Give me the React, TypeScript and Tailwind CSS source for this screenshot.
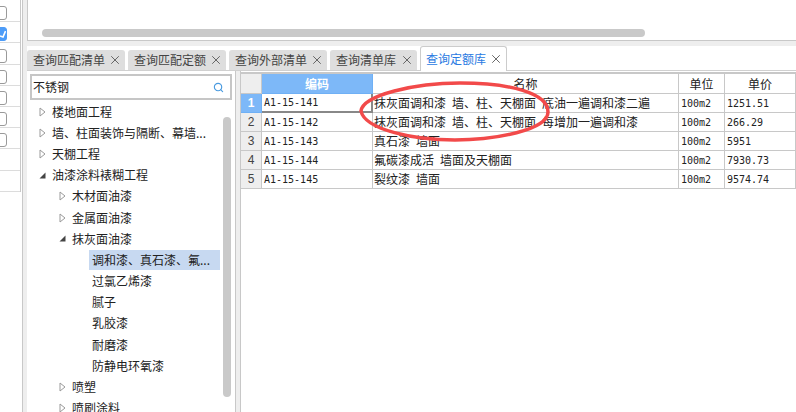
import { Search, X } from 'lucide-react'

const cjk = '"Noto Sans CJK SC", "Liberation Sans", sans-serif'

const tabs = ['查询匹配清单', '查询匹配定额', '查询外部清单', '查询清单库', '查询定额库']

const tree = [
  { label: '楼地面工程', level: 0, state: 'closed' },
  { label: '墙、柱面装饰与隔断、幕墙...', level: 0, state: 'closed' },
  { label: '天棚工程', level: 0, state: 'closed' },
  { label: '油漆涂料裱糊工程', level: 0, state: 'open' },
  { label: '木材面油漆', level: 1, state: 'closed' },
  { label: '金属面油漆', level: 1, state: 'closed' },
  { label: '抹灰面油漆', level: 1, state: 'open' },
  { label: '调和漆、真石漆、氟...', level: 2, state: 'selected' },
  { label: '过氯乙烯漆', level: 2, state: 'leaf' },
  { label: '腻子', level: 2, state: 'leaf' },
  { label: '乳胶漆', level: 2, state: 'leaf' },
  { label: '耐磨漆', level: 2, state: 'leaf' },
  { label: '防静电环氧漆', level: 2, state: 'leaf' },
  { label: '喷塑', level: 1, state: 'closed' },
  { label: '喷刷涂料', level: 1, state: 'closed' },
]

const rows = [
  ['A1-15-141', '抹灰面调和漆 墙、柱、天棚面 底油一遍调和漆二遍', '100m2', '1251.51'],
  ['A1-15-142', '抹灰面调和漆 墙、柱、天棚面 每增加一遍调和漆', '100m2', '266.29'],
  ['A1-15-143', '真石漆 墙面', '100m2', '5951'],
  ['A1-15-144', '氟碳漆成活 墙面及天棚面', '100m2', '7930.73'],
  ['A1-15-145', '裂纹漆 墙面', '100m2', '9574.74'],
]

function Arrow({ state }: { state: string }) {
  if (state === 'closed') {
    return (
      <svg width="7" height="10" viewBox="0 0 7 10" className="shrink-0">
        <path d="M1 1 L6 5 L1 9 Z" fill="#fff" stroke="#9a9a9a" />
      </svg>
    )
  }
  if (state === 'open') {
    return (
      <svg width="7" height="7" viewBox="0 0 7 7" className="shrink-0">
        <path d="M6.5 0.5 V6.5 H0.5 Z" fill="#444" />
      </svg>
    )
  }
  return <span className="w-[7px] shrink-0" />
}

export default function App() {
  return (
    <div className="relative flex h-[412px] w-[796px] overflow-hidden bg-white text-[12px] text-[#222]" style={{ fontFamily: cjk }}>
      {/* Left checkbox strip */}
      <div className="flex w-[27px] shrink-0">
        <div className="flex h-[192px] w-[21px] shrink-0 flex-col border-r border-[#c8c8c8] pt-[1px]">
          {[0, 1, 2, 3, 4, 5, 6, 7, 8].map((i) => (
            <div key={i} className="flex h-[21.2px] shrink-0 items-end border-b border-[#dcdcdc] pb-[1px]">
              {i < 7 && (
                <span
                  className={`-ml-[7px] flex h-[14px] w-[14px] items-center justify-end rounded-[3px] border ${
                    i === 1 ? 'border-[#4d9cf8] bg-[#4d9cf8]' : 'border-[#9a9a9a] bg-white'
                  }`}
                >
                  {i === 1 && (
                    <svg width="6" height="8" viewBox="0 0 6 8">
                      <path d="M0 6 L3 7 L5.5 1" stroke="#fff" strokeWidth="1.6" fill="none" />
                    </svg>
                  )}
                </span>
              )}
            </div>
          ))}
        </div>
        <div className="ml-[1px] flex-1 border-l border-[#c8c8c8] bg-[#eeeeee]" />
      </div>

      <div className="flex min-w-0 flex-1 flex-col">
        {/* Top panel with horizontal scrollbar */}
        <div className="flex h-[41px] shrink-0 flex-col justify-end border-b border-l border-[#c8c8c8] pb-[3px] pl-[14px]">
          <div className="h-[8px] w-[603px] rounded-full bg-[#c9c9c9]" />
        </div>
        <div className="h-[5px] shrink-0 bg-[#eeeeee]" />

        {/* Tabs */}
        <div className="flex h-[25px] shrink-0 items-end gap-[3px] border-b border-[#d0d0d0]">
          {tabs.map((tab, i) => {
            const active = i === 4
            return (
              <div
                key={tab}
                className={`flex items-center justify-between rounded-t-[3px] pr-[3px] ${
                  active
                    ? '-mb-px h-[25px] w-[87px] border border-b-0 border-[#cccccc] bg-white pl-[5px] text-[#2a7ae2]'
                    : `h-[20px] bg-[#dedede] pl-[6px] text-[#444] ${i === 3 ? 'w-[87px]' : 'w-[98px]'}`
                }`}
              >
                <span>{tab}</span>
                <X size={14} strokeWidth={1.5} className="shrink-0 text-[#555]" />
              </div>
            )
          })}
        </div>

        <div className="flex min-h-0 flex-1">
          {/* Tree panel */}
          <div className="flex w-[208px] shrink-0 flex-col">
            <div className="shrink-0 px-[3px] pt-[3px]">
              <div className="flex h-[26px] items-center justify-between border-2 border-[#c6c6c6] pl-[1px] pr-[6px]">
                <span>不锈钢</span>
                <Search size={11} strokeWidth={2.5} className="text-[#4a9be0]" />
              </div>
            </div>
            <div className="relative min-h-0 flex-1 overflow-hidden">
              <div className="flex flex-col pl-[12px] pt-[1px]">
                {tree.map((item) => (
                  <div
                    key={item.label}
                    className="flex h-[21.2px] shrink-0 items-center gap-[6px]"
                    style={{ paddingLeft: item.level * 20 }}
                  >
                    <Arrow state={item.state} />
                    <span
                      className={
                        item.state === 'selected'
                          ? '-ml-[3px] w-[131px] bg-[#c7d9f1] pl-[3px] leading-[20px] whitespace-nowrap'
                          : item.level === 2
                            ? '-ml-[3px] pl-[3px] whitespace-nowrap'
                            : 'whitespace-nowrap'
                      }
                    >
                      {item.label}
                    </span>
                  </div>
                ))}
              </div>
              {/* Vertical scrollbar thumb */}
              <div className="absolute right-[4px] top-[17px] h-[280px] w-[8px] rounded-full bg-[#c9c9c9]" />
            </div>
          </div>

          <div className="w-[6px] shrink-0 border-x border-[#c8c8c8] bg-[#eeeeee]" />

          {/* Data grid */}
          <div className="min-w-0 flex-1 pt-[1px]">
            <div className="grid grid-cols-[21px_111px_306px_46px_71px] border-t-2 border-[#c8c8c8]">
              <div className="h-[20px] border-b border-r border-[#c8c8c8] bg-[#eeeeee]" />
              <div className="flex h-[20px] items-center justify-center border-b border-r border-[#6fb0f5] bg-[#7db8f8] font-bold text-white">
                编码
              </div>
              <div className="flex h-[20px] items-center justify-center border-b border-r border-[#c8c8c8]">名称</div>
              <div className="flex h-[20px] items-center justify-center border-b border-r border-[#c8c8c8]">单位</div>
              <div className="flex h-[20px] items-center justify-center border-b border-r border-[#c8c8c8]">单价</div>
              {rows.map((row, i) => (
                <div key={row[0]} className="contents">
                  <div
                    className={`flex h-[19px] items-center justify-center border-b border-r font-['Liberation_Sans',sans-serif] text-[12px] ${
                      i === 0
                        ? 'border-[#6fb0f5] bg-[#7db8f8] font-bold text-white'
                        : 'border-[#c8c8c8] bg-[#eeeeee] text-[#444]'
                    }`}
                  >
                    {i + 1}
                  </div>
                  <div
                    className={`flex h-[19px] items-center pl-[2px] font-['DejaVu_Sans_Mono',monospace] text-[10px] ${
                      i === 0 ? 'border-b-2 border-r-2 border-[#888888]' : 'border-b border-r border-[#c8c8c8]'
                    }`}
                  >
                    {row[0]}
                  </div>
                  <div className="flex h-[19px] items-center overflow-hidden whitespace-nowrap border-b border-r border-[#c8c8c8] pl-[1px] [word-spacing:3.3px]">
                    {row[1]}
                  </div>
                  <div className="flex h-[19px] items-center border-b border-r border-[#c8c8c8] pl-[2px] font-['DejaVu_Sans_Mono',monospace] text-[10px]">
                    {row[2]}
                  </div>
                  <div className="flex h-[19px] items-center border-b border-r border-[#c8c8c8] pl-[2px] font-['DejaVu_Sans_Mono',monospace] text-[10px]">
                    {row[3]}
                  </div>
                </div>
              ))}
            </div>
          </div>
        </div>
      </div>

      {/* Hand-drawn red ellipse annotation */}
      <svg className="pointer-events-none absolute left-[355px] top-[75px]" width="200" height="70" viewBox="0 0 200 70">
        <path
          d="M6 36 C8 20 60 8 105 8 C155 8 193 18 193 37 C193 55 140 65 100 65 C60 65 10 55 6 36"
          fill="none"
          stroke="#f24a4a"
          strokeWidth="3.5"
          strokeLinecap="round"
        />
      </svg>
    </div>
  )
}
